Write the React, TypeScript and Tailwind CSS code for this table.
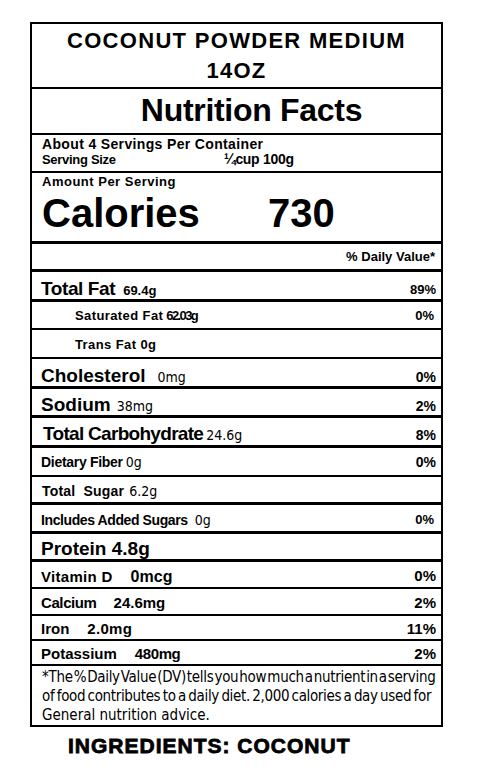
import React from 'react';

const sans = "font-['Liberation_Sans',Arial,sans-serif]";
const cond = "font-['DejaVu_Sans_Condensed','DejaVu_Sans',sans-serif]";

type RowProps = {
  h: string;
  className?: string;
  children: React.ReactNode;
};

const Row = ({ h, className = '', children }: RowProps) => (
  <div className={`${h} border-b-2 border-black flex items-start justify-between pl-[9px] pr-[5px] ${className}`}>
    {children}
  </div>
);

const App = () => {
  return (
    <div className={`bg-white w-[480px] min-h-[783px] pl-[30px] pt-[22px] text-black ${sans}`}>
      <div className="w-[413px] border-2 border-black">
        {/* header */}
        <div className="h-[65px] border-b-2 border-black flex flex-col items-center pt-[2px] text-[22px] font-bold leading-[30px] tracking-[1.3px]">
          <span>COCONUT POWDER MEDIUM</span>
          <span>14OZ</span>
        </div>
        <div className="h-[46px] border-b-2 border-black flex justify-center items-center pl-[30px] text-[32px] font-bold tracking-[-0.3px] pb-[2px]">
          Nutrition&nbsp;Facts
        </div>
        <div className="h-[38px] border-b-2 border-black pl-[10px] pt-[2px] font-bold leading-[15px]">
          <div className="text-[14px] tracking-[0.35px]">About 4 Servings Per Container</div>
          <div className="flex text-[13px] tracking-[-0.3px]">
            <span className="w-[182px]">Serving Size</span>
            <span className="text-[14px]">¼cup 100g</span>
          </div>
        </div>
        <div className="h-[71px] border-b-[3px] border-black pl-[10px] pt-[1px]">
          <div className="text-[13px] font-bold tracking-[0.5px] leading-[16px]">Amount Per Serving</div>
          <div className="flex items-baseline text-[40px] font-bold leading-[46px]">
            <span className="w-[226px]">Calories</span>
            <span>730</span>
          </div>
        </div>
        <div className="h-[28px] border-b-[3px] border-black flex justify-end items-center pr-[6px] text-[13px] font-bold">
          % Daily Value*
        </div>

        {/* nutrients */}
        <Row h="h-[30px]" className="pt-[3px] border-b-[3px]">
          <span className="flex items-baseline">
            <span className="text-[19px] font-bold tracking-[-0.4px]">Total Fat</span>
            <span className="text-[13px] font-bold ml-[8px]">69.4g</span>
          </span>
          <span className="text-[13px] font-bold pt-[5px]">89%</span>
        </Row>
        <Row h="h-[28px]" className="pt-[4px]">
          <span className="pl-[34px] text-[13px] font-bold">
            <span className="tracking-[0.4px]">Saturated Fat</span>
            <span className="ml-[3px] tracking-[-1.6px]">62.03g</span>
          </span>
          <span className="text-[13px] font-bold pr-[2px]">0%</span>
        </Row>
        <Row h="h-[29px]" className="pt-[5px]">
          <span className="pl-[34px] text-[13px] font-bold tracking-[0.4px]">Trans Fat 0g</span>
        </Row>
        <Row h="h-[30px]" className="pt-[3px] border-b-[3px]">
          <span className="flex items-baseline">
            <span className="text-[19px] font-bold">Cholesterol</span>
            <span className={`text-[14px] ml-[12px] ${cond}`}>0mg</span>
          </span>
          <span className="text-[14px] font-bold pt-[5px]">0%</span>
        </Row>
        <Row h="h-[29px]" className="pt-[2px] border-b-[3px]">
          <span className="flex items-baseline">
            <span className="text-[19px] font-bold">Sodium</span>
            <span className={`text-[14px] ml-[6px] ${cond}`}>38mg</span>
          </span>
          <span className="text-[14px] font-bold pt-[5px]">2%</span>
        </Row>
        <Row h="h-[30px]" className="pt-[2px] border-b-[3px]">
          <span className="flex items-baseline pl-[2px]">
            <span className="text-[19px] font-bold tracking-[-0.7px]">Total Carbohydrate</span>
            <span className={`text-[14px] ml-[3px] ${cond}`}>24.6g</span>
          </span>
          <span className="text-[14px] font-bold pt-[5px]">8%</span>
        </Row>
        <Row h="h-[29px]" className="pt-[4px]">
          <span className="flex items-baseline">
            <span className="text-[14px] font-bold tracking-[-0.3px]">Dietary Fiber</span>
            <span className={`text-[14px] ml-[3px] ${cond}`}>0g</span>
          </span>
          <span className="text-[14px] font-bold">0%</span>
        </Row>
        <Row h="h-[28px]" className="pt-[4px] border-b-[3px]">
          <span className="flex items-baseline pl-[1px]">
            <span className="text-[14px] font-bold tracking-[0.2px]">Total&nbsp;&nbsp;Sugar</span>
            <span className={`text-[14px] ml-[5px] ${cond}`}>6.2g</span>
          </span>
        </Row>
        <Row h="h-[29px]" className="pt-[5px] border-b-[3px]">
          <span className="flex items-baseline">
            <span className="text-[14px] font-bold tracking-[-0.4px]">Includes Added Sugars</span>
            <span className={`text-[14px] ml-[7px] ${cond}`}>0g</span>
          </span>
          <span className="text-[13px] font-bold pr-[2px]">0%</span>
        </Row>
        <Row h="h-[28px]" className="pt-[1px] border-b-[3px]">
          <span className="text-[19px] font-bold">Protein 4.8g</span>
        </Row>
        <Row h="h-[27px]" className="pt-[3px]">
          <span className="text-[15px] font-bold">
            <span className="tracking-[0.3px]">Vitamin D</span>
            <span className="ml-[18px] text-[16px]">0mcg</span>
          </span>
          <span className="text-[15px] font-bold">0%</span>
        </Row>
        <Row h="h-[27px]" className="pt-[3px]">
          <span className="text-[15px] font-bold">
            <span className="tracking-[-0.4px]">Calcium</span>
            <span className="ml-[17px]">24.6mg</span>
          </span>
          <span className="text-[15px] font-bold">2%</span>
        </Row>
        <Row h="h-[25px]" className="pt-[2px]">
          <span className="text-[15px] font-bold">
            Iron<span className="ml-[18px] tracking-[0.3px]">2.0mg</span>
          </span>
          <span className="text-[15px] font-bold">11%</span>
        </Row>
        <Row h="h-[25px]" className="pt-[2px]">
          <span className="text-[15px] font-bold">
            Potassium<span className="ml-[18px] tracking-[-0.4px]">480mg</span>
          </span>
          <span className="text-[15px] font-bold">2%</span>
        </Row>

        {/* footnote */}
        <div className={`h-[59px] pl-[10px] pr-[4px] pt-[2px] text-[15px] leading-[19px] ${cond}`}>
          <div className="whitespace-nowrap tracking-[-0.3px] [word-spacing:-3px]">
            *The % Daily Value (DV) tells you how much a nutrient in a serving
          </div>
          <div className="whitespace-nowrap tracking-[-0.35px] [word-spacing:-1.5px]">
            of food contributes to a daily diet. 2,000 calories a day used for
          </div>
          <div className="whitespace-nowrap">General nutrition advice.</div>
        </div>
      </div>
      <div className="pl-[38px] pt-[7px] text-[21px] font-black leading-[24px] tracking-[1px] [-webkit-text-stroke:0.8px_black]">
        INGREDIENTS: COCONUT
      </div>
    </div>
  );
};

export default App;
